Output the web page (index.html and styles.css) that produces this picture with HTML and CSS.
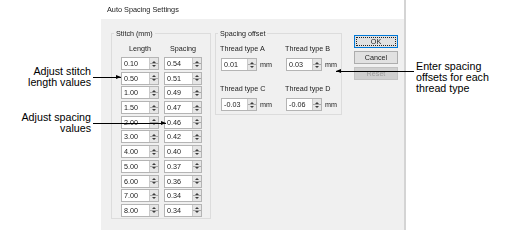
FILE: index.html
```html
<!DOCTYPE html>
<html lang="en">
<head>
    <meta charset="UTF-8">
    <title>Auto Spacing Settings</title>
    <link rel="stylesheet" href="styles.css">
</head>
<body>
    <div class="page">
        <div class="notes-left">
            <p class="note note-stitch">Adjust stitch<br>length values</p>
            <p class="note note-spacing">Adjust spacing<br>values</p>
        </div>

        <div class="dialog">
            <div class="dialog-title">Auto Spacing Settings</div>
            <div class="dialog-body">
                <div class="group stitch">
                    <div class="group-title">Stitch (mm)</div>
                    <div class="col-heads">
                        <div>Length</div>
                        <div>Spacing</div>
                    </div>
                    <div class="stitch-rows">
                        <div class="spin"><span class="val">0.10</span><span class="arrows"></span></div>
                        <div class="spin"><span class="val">0.54</span><span class="arrows"></span></div>
                        <div class="spin"><span class="val">0.50</span><span class="arrows"></span></div>
                        <div class="spin"><span class="val">0.51</span><span class="arrows"></span></div>
                        <div class="spin"><span class="val">1.00</span><span class="arrows"></span></div>
                        <div class="spin"><span class="val">0.49</span><span class="arrows"></span></div>
                        <div class="spin"><span class="val">1.50</span><span class="arrows"></span></div>
                        <div class="spin"><span class="val">0.47</span><span class="arrows"></span></div>
                        <div class="spin"><span class="val">2.00</span><span class="arrows"></span></div>
                        <div class="spin"><span class="val">0.46</span><span class="arrows"></span></div>
                        <div class="spin"><span class="val">3.00</span><span class="arrows"></span></div>
                        <div class="spin"><span class="val">0.42</span><span class="arrows"></span></div>
                        <div class="spin"><span class="val">4.00</span><span class="arrows"></span></div>
                        <div class="spin"><span class="val">0.40</span><span class="arrows"></span></div>
                        <div class="spin"><span class="val">5.00</span><span class="arrows"></span></div>
                        <div class="spin"><span class="val">0.37</span><span class="arrows"></span></div>
                        <div class="spin"><span class="val">6.00</span><span class="arrows"></span></div>
                        <div class="spin"><span class="val">0.36</span><span class="arrows"></span></div>
                        <div class="spin"><span class="val">7.00</span><span class="arrows"></span></div>
                        <div class="spin"><span class="val">0.34</span><span class="arrows"></span></div>
                        <div class="spin"><span class="val">8.00</span><span class="arrows"></span></div>
                        <div class="spin"><span class="val">0.34</span><span class="arrows"></span></div>
                    </div>
                </div>

                <div class="group offset">
                    <div class="group-title">Spacing offset</div>
                    <div class="offset-grid">
                        <div class="field">
                            <div class="field-label">Thread type A</div>
                            <div class="field-row"><div class="spin"><span class="val">0.01</span><span class="arrows"></span></div><span class="unit">mm</span></div>
                        </div>
                        <div class="field">
                            <div class="field-label">Thread type B</div>
                            <div class="field-row"><div class="spin"><span class="val">0.03</span><span class="arrows"></span></div><span class="unit">mm</span></div>
                        </div>
                        <div class="field">
                            <div class="field-label">Thread type C</div>
                            <div class="field-row"><div class="spin"><span class="val">-0.03</span><span class="arrows"></span></div><span class="unit">mm</span></div>
                        </div>
                        <div class="field">
                            <div class="field-label">Thread type D</div>
                            <div class="field-row"><div class="spin"><span class="val">-0.06</span><span class="arrows"></span></div><span class="unit">mm</span></div>
                        </div>
                    </div>
                </div>

                <div class="buttons">
                    <button class="btn btn-default"><span class="btn-text">OK</span></button>
                    <button class="btn"><span class="btn-text">Cancel</span></button>
                    <button class="btn" disabled><span class="btn-text">Reset</span></button>
                </div>
            </div>
        </div>

        <div class="notes-right">
            <p class="note note-offset">Enter spacing<br>offsets for each<br>thread type</p>
        </div>
    </div>
</body>
</html>
```

FILE: styles.css
```css
body {
    margin: 0;
    background: #fff;
    font-family: "Liberation Sans", Arial, sans-serif;
    color: #000;
}
.page { display: flex; height: 230px; }

/* callouts */
.notes-left {
    width: 101px;
    box-sizing: border-box;
    padding: 66px 10px 0 0;
    text-align: right;
}
.notes-right { padding: 61px 0 0 10px; }
.note {
    position: relative;
    z-index: 2;
    margin: 0;
    font-size: 10.7px;
    line-height: 11px;
}
.note-spacing { margin-top: 24px; }
.note::after {
    content: "";
    position: absolute;
    top: 10.5px;
    height: 1px;
    background: #000;
}
.note::before {
    content: "";
    position: absolute;
    top: 9px;
    border-top: 2px solid transparent;
    border-bottom: 2px solid transparent;
}
.note-stitch::after { left: calc(100% + 2px); width: 28px; }
.note-stitch::before { left: calc(100% + 25px); border-left: 5px solid #000; }
.note-spacing::after { left: calc(100% + 2px); width: 73px; }
.note-spacing::before { left: calc(100% + 70px); border-left: 5px solid #000; }
.note-offset::after { left: -80px; width: 78px; top: 9.5px; }
.note-offset::before { left: -80px; top: 8px; border-right: 5px solid #000; }

/* dialog */
.dialog {
    width: 305px;
    box-sizing: border-box;
    border-right: 2px solid #d4d4d4;
    display: flex;
    flex-direction: column;
    font-size: 7.2px;
    color: #222;
}
.dialog-title {
    height: 19px;
    line-height: 19px;
    padding-left: 6px;
    font-size: 7.3px;
    background: #fff;
    filter: grayscale(1);
}
.dialog-body {
    flex: 1;
    background: #f0f0f0;
    padding: 14px 6px 0 10px;
    display: flex;
    align-items: flex-start;
}

/* keeps the tiny text grey instead of colour-fringed */
.group, .btn-text { filter: grayscale(1); }

.group { border: 1px solid #dcdcdc; }
.group-title {
    width: fit-content;
    padding: 0 2px;
    line-height: 9px;
    background: #f0f0f0;
}

.stitch { width: 100px; box-sizing: border-box; padding: 0 8px 1px 9px; }
.stitch .group-title { margin: -5px 0 0 -7px; }
.col-heads {
    display: grid;
    grid-template-columns: 38px 38px;
    column-gap: 5px;
    margin-top: 5.5px;
    line-height: 9px;
    text-align: center;
}
.stitch-rows {
    display: grid;
    grid-template-columns: 38px 38px;
    grid-auto-rows: 13px;
    column-gap: 5px;
    row-gap: 1.7px;
    margin-top: 4.5px;
}

.offset {
    width: 127px;
    box-sizing: border-box;
    margin-left: 4px;
    padding: 0 4px 3px 5px;
}
.offset .group-title { margin: -5px 0 0 -3px; }
.offset-grid {
    display: grid;
    grid-template-columns: 65px 1fr;
    row-gap: 12.5px;
    margin-top: 5.5px;
}
.field-label { line-height: 9px; margin-left: -1px; }
.field-row { display: flex; align-items: center; margin-top: 5.5px; }
.field-row .spin { width: 36px; height: 13px; }
.unit { margin-left: 3px; }

/* spin box */
.spin {
    display: flex;
    box-sizing: border-box;
    border: 1px solid #b4b4b4;
    background: #fff;
}
.val {
    flex: 1;
    padding-left: 2px;
    line-height: 11px;
}
.arrows {
    width: 8px;
    border-left: 1px solid #cacaca;
    background: #e6e6e6 linear-gradient(#a8a8a8, #a8a8a8) center / 100% 1px no-repeat;
    display: flex;
    flex-direction: column;
    align-items: center;
    justify-content: center;
    gap: 2px;
}
.arrows::before,
.arrows::after {
    content: "";
    border-left: 2px solid transparent;
    border-right: 2px solid transparent;
}
.arrows::before { border-bottom: 2px solid #3c3c3c; }
.arrows::after { border-top: 2px solid #3c3c3c; }

/* buttons */
.buttons {
    width: 47px;
    margin: 2px 0 0 12px;
    display: flex;
    flex-direction: column;
    gap: 3px;
}
.btn {
    height: 13px;
    padding: 0;
    font-family: inherit;
    font-size: 7.2px;
    line-height: 11px;
    color: #222;
    background: #e1e1e1;
    border: 1px solid #adadad;
}
.btn-default {
    border-color: #0078d7;
    outline: 1px dotted #222;
    outline-offset: -3px;
}
.btn:disabled {
    background: #cfcfcf;
    border-color: #c2c2c2;
    color: #9c9c9c;
}
```
